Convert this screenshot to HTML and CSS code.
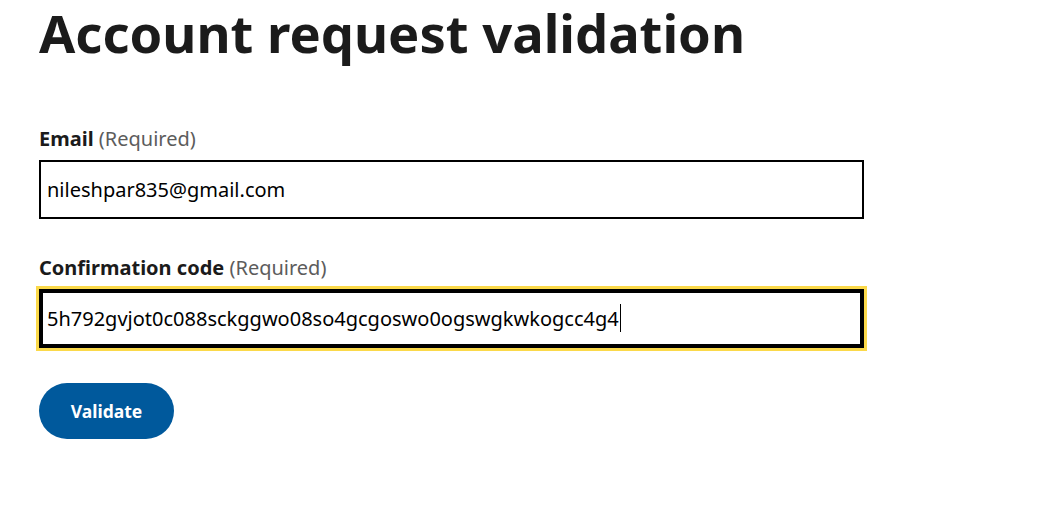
FILE: index.html
```html
<!DOCTYPE html>
<html lang="en">
<head>
<meta charset="utf-8">
<title>Account request validation</title>
<link rel="stylesheet" href="styles.css">
</head>
<body>
<main class="page">
  <h1 class="title">Account request validation</h1>
  <form class="form">
    <div class="group">
      <label class="label" for="email"><strong>Email</strong> <span class="req">(Required)</span></label>
      <div class="input" id="email" role="textbox">nileshpar835@gmail.com</div>
    </div>
    <div class="group">
      <label class="label" for="code"><strong>Confirmation code</strong> <span class="req">(Required)</span></label>
      <div class="input input--focus" id="code" role="textbox">5h792gvjot0c088sckggwo08so4gcgoswo0ogswgkwkogcc4g4<span class="caret"></span></div>
    </div>
    <button type="button" class="btn">Validate</button>
  </form>
</main>
</body>
</html>
```
FILE: styles.css
```css
* { box-sizing: border-box; }
html, body { margin: 0; padding: 0; background: #fff; }
body {
  font-family: "Noto Sans", "Open Sans", sans-serif;
  color: #1b1b1b;
}
.page {
  padding: 4px 0 0 39px;
}
.title {
  margin: 0;
  font-size: 52.5px;
  line-height: 1.1;
  font-weight: 700;
  color: #1b1b1b;
}
.form {
  margin-top: 63px;
  width: 825px;
}
.group {
  margin-bottom: 35px;
}
.label {
  display: block;
  font-size: 20px;
  line-height: 28px;
  margin-bottom: 7px;
}
.label strong { font-weight: 700; color: #1b1b1b; }
.req { color: #5c5c5c; font-weight: 400; }
.input {
  display: flex;
  align-items: center;
  height: 59px;
  border: 2px solid #000;
  padding: 0 6px;
  font-size: 20px;
  color: #000;
  white-space: nowrap;
}
.input--focus {
  outline: 3px solid #fbd94a;
  outline-offset: 0;
  box-shadow: inset 0 0 0 2px #000;
}
.caret {
  display: inline-block;
  width: 1px;
  height: 28px;
  background: #000;
  margin-left: 1px;
}
.btn {
  display: inline-flex;
  align-items: center;
  justify-content: center;
  width: 135px;
  height: 56px;
  border: 0;
  border-radius: 28px;
  background: #00599c;
  color: #fff;
  font-family: "Noto Sans", "Open Sans", sans-serif;
  font-size: 17.5px;
  font-weight: 700;
  cursor: pointer;
}
```
